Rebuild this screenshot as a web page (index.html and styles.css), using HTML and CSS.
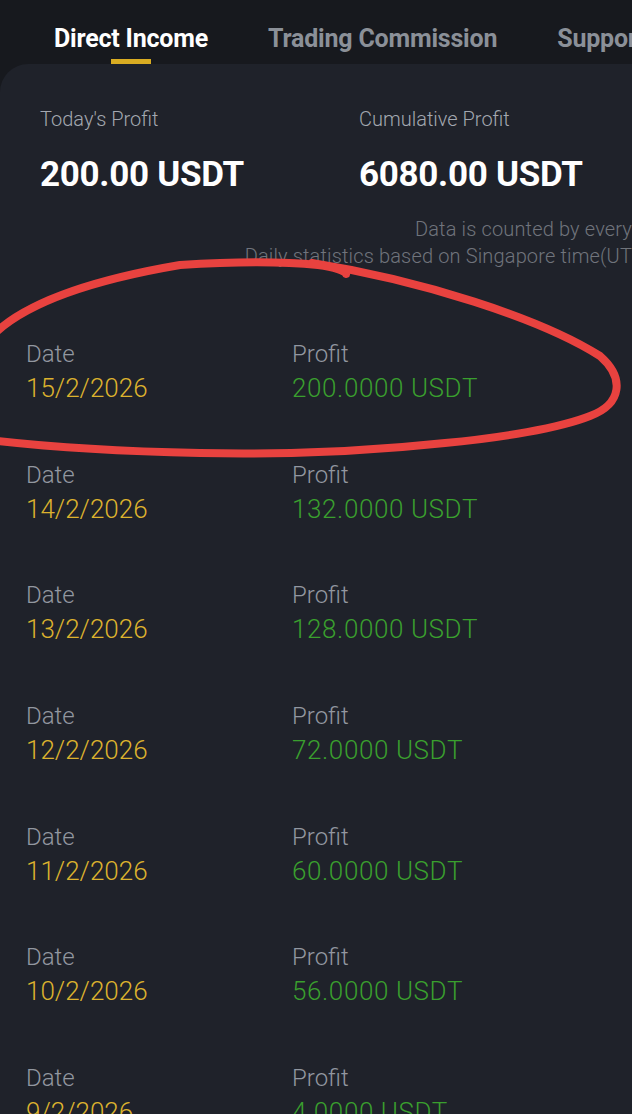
FILE: index.html
```html
<!DOCTYPE html>
<html lang="en">
<head>
  <meta charset="UTF-8" />
  <meta name="viewport" content="width=device-width, initial-scale=1.0" />
  <title>Direct Income</title>
  <link rel="stylesheet" href="styles.css">
</head>
<body>

  <nav class="tabs">
    <a href="#" class="tab active">Direct Income</a>
    <a href="#" class="tab">Trading Commission</a>
    <a href="#" class="tab">Support</a>
  </nav>

  <main class="panel">
    <section class="summary">
      <div class="stat">
        <div class="stat-label">Today's Profit</div>
        <div class="stat-value">200.00 USDT</div>
      </div>
      <div class="stat">
        <div class="stat-label">Cumulative Profit</div>
        <div class="stat-value">6080.00 USDT</div>
      </div>
    </section>

    <div class="note">
      <p>Data is counted by every</p>
      <p>Daily statistics based on Singapore time(UT</p>
    </div>

    <ul class="records">
      <li class="record">
        <div class="cell"><span class="label">Date</span><span class="date">15/2/2026</span></div>
        <div class="cell"><span class="label">Profit</span><span class="amount">200.0000 USDT</span></div>
      </li>
      <li class="record">
        <div class="cell"><span class="label">Date</span><span class="date">14/2/2026</span></div>
        <div class="cell"><span class="label">Profit</span><span class="amount">132.0000 USDT</span></div>
      </li>
      <li class="record">
        <div class="cell"><span class="label">Date</span><span class="date">13/2/2026</span></div>
        <div class="cell"><span class="label">Profit</span><span class="amount">128.0000 USDT</span></div>
      </li>
      <li class="record">
        <div class="cell"><span class="label">Date</span><span class="date">12/2/2026</span></div>
        <div class="cell"><span class="label">Profit</span><span class="amount">72.0000 USDT</span></div>
      </li>
      <li class="record">
        <div class="cell"><span class="label">Date</span><span class="date">11/2/2026</span></div>
        <div class="cell"><span class="label">Profit</span><span class="amount">60.0000 USDT</span></div>
      </li>
      <li class="record">
        <div class="cell"><span class="label">Date</span><span class="date">10/2/2026</span></div>
        <div class="cell"><span class="label">Profit</span><span class="amount">56.0000 USDT</span></div>
      </li>
      <li class="record">
        <div class="cell"><span class="label">Date</span><span class="date">9/2/2026</span></div>
        <div class="cell"><span class="label">Profit</span><span class="amount">4.0000 USDT</span></div>
      </li>
    </ul>
  </main>

  <!-- hand-drawn marker over the first record -->
  <svg class="scribble" width="632" height="1114" viewBox="0 0 632 1114">
    <path d="M-10 338 C 20 306, 80 282, 180 265 C 240 261, 290 262, 318 265 C 335 267, 345 271, 346 274"
          fill="none" stroke="#e8423f" stroke-width="8" stroke-linecap="round" />
    <path d="M312 263 C 420 280, 540 318, 600 356 C 625 378, 622 404, 590 416 C 560 428, 500 438, 445 443 C 380 450, 300 455, 200 453 C 110 451, 40 446, -10 440"
          fill="none" stroke="#e8423f" stroke-width="8" stroke-linecap="round" />
  </svg>

</body>
</html>
```

FILE: styles.css
```css
/* Reset */
* {
  margin: 0;
  padding: 0;
  box-sizing: border-box;
}

body {
  position: relative;
  width: 632px;
  height: 1114px;
  overflow: hidden;
  background: #17191e;
  font-family: Roboto, 'Liberation Sans', sans-serif;
  color: #fff;
}

/* Tabs */
.tabs {
  display: flex;
  gap: 60px;
  height: 64px;
  padding-left: 54px;
  white-space: nowrap;
  overflow: hidden;
}

.tab {
  position: relative;
  padding-top: 25px;
  font-size: 25px;
  line-height: 28px;
  font-weight: 700;
  color: #8b9098;
  text-decoration: none;
  letter-spacing: -0.2px;
}

.tab.active {
  color: #fff;
}

.tab.active::after {
  content: '';
  position: absolute;
  left: 50%;
  bottom: 0;
  width: 40px;
  height: 5px;
  margin-left: -20px;
  background: #d9ac22;
}

/* Panel */
.panel {
  background: #1f222a;
  border-top-left-radius: 28px;
  min-height: 1050px;
}

.summary {
  display: grid;
  grid-template-columns: 319px 1fr;
  padding: 43px 0 0 40px;
}

.stat-label {
  font-size: 20px;
  line-height: 24px;
  font-weight: 300;
  color: #a3a8b0;
}

.stat-value {
  margin-top: 24px;
  font-size: 35px;
  line-height: 40px;
  font-weight: 700;
  color: #fff;
  letter-spacing: -0.3px;
}

.note {
  margin-top: 21px;
  text-align: right;
  white-space: nowrap;
  overflow: hidden;
  font-size: 20px;
  line-height: 27px;
  font-weight: 300;
  letter-spacing: 0.15px;
  color: #70747c;
}

/* Records */
.records {
  list-style: none;
  margin-top: 42px;
}

.record {
  display: grid;
  grid-template-columns: 266px 1fr;
  padding: 26px 0 26.67px 26px;
}

.cell {
  display: flex;
  flex-direction: column;
}

.label {
  font-size: 24px;
  line-height: 32px;
  font-weight: 300;
  color: #9297a0;
}

.date,
.amount {
  font-size: 26px;
  line-height: 36px;
  font-weight: 300;
}

.date {
  color: #dcb22e;
}

.amount {
  color: #3a9f2e;
  letter-spacing: 0.6px;
}

.scribble {
  position: absolute;
  top: 0;
  left: 0;
  pointer-events: none;
}
```
